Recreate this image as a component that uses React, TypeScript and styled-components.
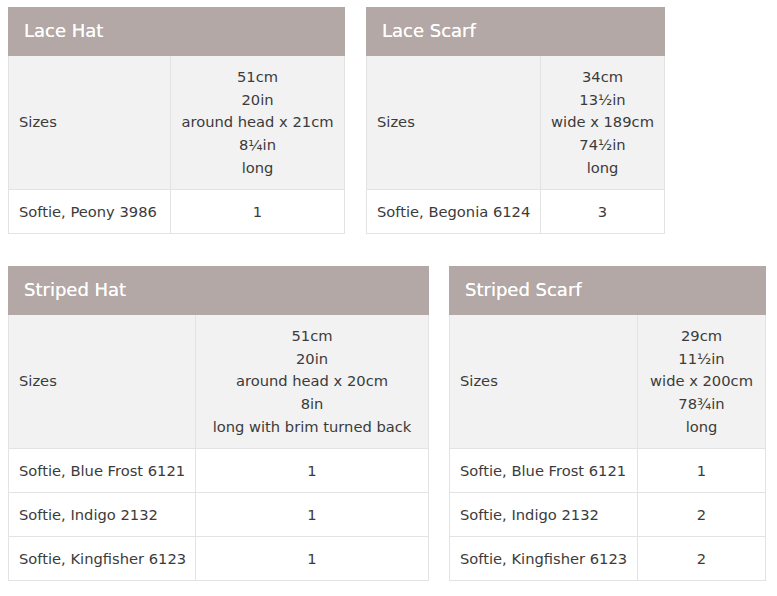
import styled, { createGlobalStyle } from "styled-components";

const GlobalStyle = createGlobalStyle`
  body {
    margin: 0;
    background: #ffffff;
    font-family: "DejaVu Sans", "Noto Sans", sans-serif;
    color: #3b3b3b;
  }
`;

const Page = styled.div`
  padding: 7px 8px;
  display: flex;
  flex-direction: column;
  gap: 31.5px;
`;

const Row = styled.div<{ $gap: number }>`
  display: flex;
  align-items: flex-start;
  gap: ${(p) => p.$gap}px;
`;

const Table = styled.table`
  border-collapse: collapse;
  table-layout: fixed;
  font-size: 14.7px;
  line-height: 22.5px;
`;

const Head = styled.th`
  background: #b3a8a6;
  color: #ffffff;
  text-align: left;
  font-weight: 400;
  font-size: 18px;
  height: 47px;
  padding: 0 15px;
  border: 1px solid #b3a8a6;
  text-shadow: 0 0 0.6px #ffffff;
`;

const Cell = styled.td<{ $center?: boolean; $shade?: boolean }>`
  border: 1px solid #e3e3e3;
  padding: 10.25px 10px;
  vertical-align: middle;
  text-align: ${(p) => (p.$center ? "center" : "left")};
  background: ${(p) => (p.$shade ? "#f2f2f2" : "#ffffff")};
  white-space: nowrap;
`;

const SizeLine = styled.div`
  line-height: 22.6px;
`;

type Yarn = [string, string];

type Pattern = {
  title: string;
  widths: [number, number];
  sizes: string[];
  yarns: Yarn[];
};

const patterns: Pattern[] = [
  {
    title: "Lace Hat",
    widths: [162, 174],
    sizes: ["51cm", "20in", "around head x 21cm", "8¼in", "long"],
    yarns: [["Softie, Peony 3986", "1"]],
  },
  {
    title: "Lace Scarf",
    widths: [174, 124],
    sizes: ["34cm", "13½in", "wide x 189cm", "74½in", "long"],
    yarns: [["Softie, Begonia 6124", "3"]],
  },
  {
    title: "Striped Hat",
    widths: [187, 233],
    sizes: ["51cm", "20in", "around head x 20cm", "8in", "long with brim turned back"],
    yarns: [
      ["Softie, Blue Frost 6121", "1"],
      ["Softie, Indigo 2132", "1"],
      ["Softie, Kingfisher 6123", "1"],
    ],
  },
  {
    title: "Striped Scarf",
    widths: [188, 128],
    sizes: ["29cm", "11½in", "wide x 200cm", "78¾in", "long"],
    yarns: [
      ["Softie, Blue Frost 6121", "1"],
      ["Softie, Indigo 2132", "2"],
      ["Softie, Kingfisher 6123", "2"],
    ],
  },
];

const PatternTable = ({ p }: { p: Pattern }) => (
  <Table style={{ width: p.widths[0] + p.widths[1] }}>
    <colgroup>
      <col style={{ width: p.widths[0] }} />
      <col style={{ width: p.widths[1] }} />
    </colgroup>
    <thead>
      <tr>
        <Head colSpan={2}>{p.title}</Head>
      </tr>
    </thead>
    <tbody>
      <tr>
        <Cell $shade>Sizes</Cell>
        <Cell $shade $center>
          {p.sizes.map((s) => (
            <SizeLine key={s}>{s}</SizeLine>
          ))}
        </Cell>
      </tr>
      {p.yarns.map(([name, qty]) => (
        <tr key={name}>
          <Cell>{name}</Cell>
          <Cell $center>{qty}</Cell>
        </tr>
      ))}
    </tbody>
  </Table>
);

export default function App() {
  return (
    <>
      <GlobalStyle />
      <Page>
        <Row $gap={21}>
          <PatternTable p={patterns[0]} />
          <PatternTable p={patterns[1]} />
        </Row>
        <Row $gap={20}>
          <PatternTable p={patterns[2]} />
          <PatternTable p={patterns[3]} />
        </Row>
      </Page>
    </>
  );
}
